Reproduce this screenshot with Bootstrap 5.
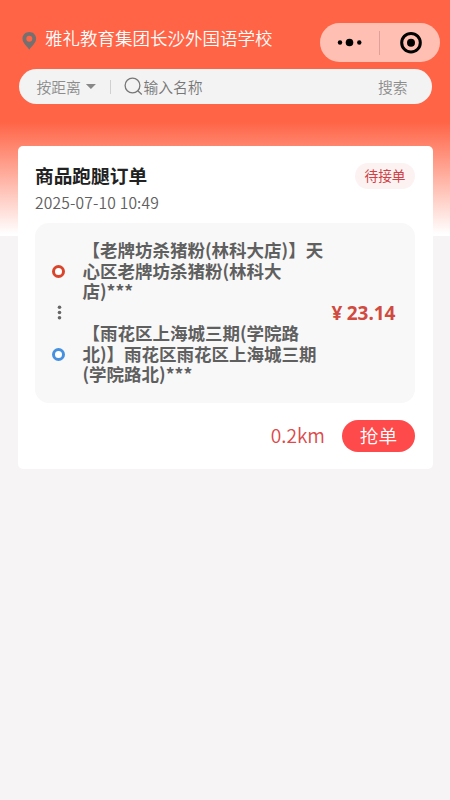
<!DOCTYPE html>
<html lang="zh-CN">
<head>
<meta charset="utf-8">
<meta name="viewport" content="width=device-width, initial-scale=1">
<title>商品跑腿订单</title>
<link href="https://cdn.jsdelivr.net/npm/bootstrap@5.3.0/dist/css/bootstrap.min.css" rel="stylesheet">
<style>
body{font-family:"Noto Sans CJK SC",sans-serif;background:#f6f4f5;height:800px;overflow:hidden;line-height:1}
.hero{height:236px;background:linear-gradient(#ff6446 0,#ff6446 122px,#fff 234px);padding:23px 10.5px 0 18.5px}
.top-row{height:39px}
.school{font-size:17.5px;font-weight:350;color:#fff;line-height:30px;margin-left:8.5px}
.pin{margin:9px 0 0 3px}
.capsule{width:120px;height:39px;background:#ffc0b3;border-radius:20px}
.search-bar{width:413px;height:35px;margin-top:7px;border-radius:18px;background:#f3f3f3;font-size:14.8px;line-height:34px;color:#8c8c8c;font-weight:350;padding:0 24px 0 18px}
.caret{width:10px;height:5px;background:#888;clip-path:polygon(0 0,100% 0,50% 100%);margin:0 14px 0 5px}
.divider{width:1px;height:14px;background:#d0d0d0;margin-right:13.5px}
.placeholder-text{color:#777}
.order{width:415px;height:323px;margin:-90px 0 0 17.5px;border-radius:5px;padding:17px 17.5px 0;border:0}
.order-title{font-size:18.7px;font-weight:700;color:#222;line-height:24px}
.status{width:60px;height:26px;border-radius:13px;background:#fdf2f2;color:#cf4145;font-size:13.7px;line-height:25px}
.time{font-size:15.6px;letter-spacing:.18px;font-weight:350;color:#606060;line-height:19px;height:20px;margin-top:4px}
.route{height:180px;border-radius:14px;background:#f8f8f8;margin-top:10px}
.rail{width:47px;padding-top:42px}
.ring{width:13px;height:13px;border-radius:50%;border:3px solid #d9452b;background:#fff}
.ring-blue{border-color:#4690df}
.addresses{width:249px;margin-left:.5px;font-size:17.5px;font-weight:700;color:#5f5f5f;line-height:20.5px;padding-top:17px}
.second{margin-top:21.5px}
.price{font-family:"Noto Sans","Noto Sans CJK SC",sans-serif;font-size:19px;font-weight:700;color:#d04a40}
.yen{margin-right:4.3px}
.distance{font-size:19.2px;font-weight:350;color:#dc4a4b;margin-right:17px}
.grab{width:73px;height:32px;border-radius:16px;background:#ff4a4c;color:#fff;font-size:18.7px;font-weight:350;line-height:30px;padding:0 0 2px;border:0}
.actions{margin-top:17px}
</style>
<script src="https://cdn.jsdelivr.net/npm/bootstrap@5.3.0/dist/js/bootstrap.bundle.min.js"></script>
</head>
<body>
<header class="hero">
  <div class="top-row d-flex justify-content-between align-items-start">
    <div class="d-flex">
      <svg class="pin" width="15" height="18" viewBox="0 0 15 18"><path fill="#757070" fill-rule="evenodd" d="M7.300 0C3.300 0 .5 2.900.5 6.600c0 4.500 4.300 7.600 6.800 11.100C9.800 14.200 14.100 11.100 14.100 6.600 14.100 2.900 11.300 0 7.300 0Zm0 3.800a3 3 0 1 1 0 6 3 3 0 0 1 0-6Z"/></svg>
      <span class="school text-nowrap">雅礼教育集团长沙外国语学校</span>
    </div>
    <div class="capsule flex-shrink-0">
      <svg class="d-block" width="120" height="39" viewBox="0 0 120 39"><circle cx="20" cy="19.500" r="2.200"/><circle cx="29.500" cy="19.500" r="3.800"/><circle cx="39.300" cy="19.500" r="2.200"/><path d="M59.500 8v24" stroke="#dfa196"/><circle cx="91" cy="19.700" r="9.300" fill="none" stroke="#000" stroke-width="3"/><circle cx="91" cy="19.700" r="4"/></svg>
    </div>
  </div>
  <div class="search-bar d-flex align-items-center">
    <span>按距离</span><i class="caret"></i><i class="divider"></i>
    <svg width="19" height="19" viewBox="0 0 19 19" fill="none" stroke="#777" stroke-width="1.300"><circle cx="8.500" cy="8.500" r="7.400"/><path d="m13.800 13.800 4 3.700"/></svg>
    <span class="placeholder-text">输入名称</span>
    <span class="ms-auto">搜索</span>
  </div>
</header>
<main class="order card">
  <div class="d-flex justify-content-between">
    <div class="order-title">商品跑腿订单</div>
    <div class="status text-center">待接单</div>
  </div>
  <div class="time">2025-07-10 10:49</div>
  <section class="route d-flex">
    <div class="rail d-flex flex-column align-items-center">
      <span class="ring"></span>
      <svg class="my-4" width="6" height="22" viewBox="0 0 6 22" fill="#666"><circle cx="3.500" cy="5.200" r="1.800"/><circle cx="3.500" cy="10.500" r="1.800"/><circle cx="3.500" cy="15.800" r="1.800"/></svg>
      <span class="ring ring-blue"></span>
    </div>
    <div class="addresses text-nowrap">
      <div>【老牌坊杀猪粉(林科大店)】天<br>心区老牌坊杀猪粉(林科大<br>店)***</div>
      <div class="second">【雨花区上海城三期(学院路<br>北)】雨花区雨花区上海城三期<br>(学院路北)***</div>
    </div>
    <div class="price align-self-center text-nowrap"><span class="yen">¥</span>23.14</div>
  </section>
  <div class="actions d-flex justify-content-end align-items-center">
    <span class="distance">0.2km</span>
    <button class="grab btn">抢单</button>
  </div>
</main>
</body>
</html>
